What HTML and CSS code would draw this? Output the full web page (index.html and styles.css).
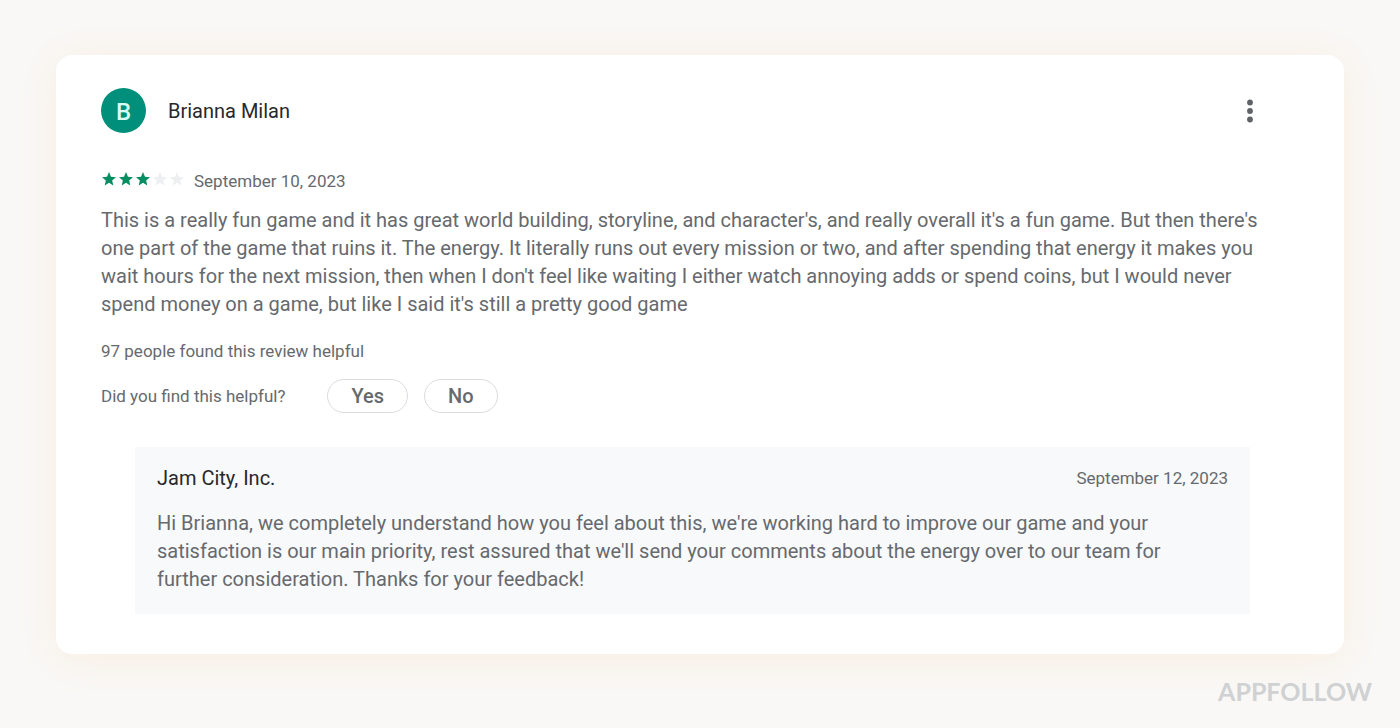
FILE: index.html
```html
<!DOCTYPE html>
<html lang="en">
<head>
    <meta charset="UTF-8">
    <meta name="viewport" content="width=device-width, initial-scale=1.0">
    <title>Review by Brianna Milan</title>
    <link rel="stylesheet" href="styles.css">
</head>
<body>
    <!-- one star shape, reused for the whole rating -->
    <svg class="sprite" aria-hidden="true">
        <symbol id="star" viewBox="0 0 24 24">
            <path d="M12 18.600L19.400 23l-2-8.400L24 9l-8.600-.700L12 0 8.600 8.300 0 9l6.600 5.600L4.600 23z"/>
        </symbol>
    </svg>

    <article class="review">
        <header class="review-header">
            <div class="avatar">B</div>
            <h1 class="name">Brianna Milan</h1>
            <button class="menu-button" type="button" aria-label="More options">
                <svg viewBox="0 0 24 24" width="24" height="24">
                    <circle cx="12" cy="3.500" r="2.900"/>
                    <circle cx="12" cy="12" r="2.900"/>
                    <circle cx="12" cy="20.500" r="2.900"/>
                </svg>
            </button>
        </header>

        <div class="rating">
            <div class="stars" role="img" aria-label="Rated 3 stars out of 5">
                <svg class="star filled"><use href="#star"/></svg>
                <svg class="star filled"><use href="#star"/></svg>
                <svg class="star filled"><use href="#star"/></svg>
                <svg class="star"><use href="#star"/></svg>
                <svg class="star"><use href="#star"/></svg>
            </div>
            <time class="small" datetime="2023-09-10">September 10, 2023</time>
        </div>

        <p class="text">This is a really fun game and it has great world building, storyline, and character's, and really overall it's a fun game. But then there's one part of the game that ruins it. The energy. It literally runs out every mission or two, and after spending that energy it makes you wait hours for the next mission, then when I don't feel like waiting I either watch annoying adds or spend coins, but I would never spend money on a game, but like I said it's still a pretty good game</p>

        <p class="small helpful-count">97 people found this review helpful</p>

        <div class="vote">
            <span class="small vote-label">Did you find this helpful?</span>
            <button class="vote-button" type="button">Yes</button>
            <button class="vote-button" type="button">No</button>
        </div>

        <section class="reply">
            <header class="reply-header">
                <h2 class="name">Jam City, Inc.</h2>
                <time class="small" datetime="2023-09-12">September 12, 2023</time>
            </header>
            <p class="text reply-text">Hi Brianna, we completely understand how you feel about this, we're working hard to improve our game and your satisfaction is our main priority, rest assured that we'll send your comments about the energy over to our team for further consideration. Thanks for your feedback!</p>
        </section>
    </article>

    <footer class="brand">APPFOLLOW</footer>
</body>
</html>
```

FILE: styles.css
```css
* {
    box-sizing: border-box;
}

body {
    margin: 0;
    padding: 55px 56px 0;
    background-color: #f9f8f6;
    color: #66696d;
    font-family: Roboto, 'Liberation Sans', sans-serif;
}

h1, h2, p {
    margin: 0;
}

.sprite {
    display: none;
}

.review {
    padding: 33px 67px 40px 45px;
    background: #fff;
    border-radius: 16px;
    box-shadow: 0 4px 40px #f8ede0;
}

.name {
    color: #27282b;
    font-size: 20px;
    font-weight: 400;
    line-height: 28px;
}

.text {
    font-size: 20px;
    line-height: 28px;
}

.small {
    font-size: 17px;
    line-height: 24px;
}

.review-header {
    display: flex;
    align-items: center;
    margin-bottom: 36px;
}

.avatar {
    width: 45px;
    height: 45px;
    margin-right: 22px;
    border-radius: 50%;
    background: #008f7a;
    color: #d9fbf5;
    font-size: 24px;
    font-weight: 500;
    line-height: 48px;
    text-align: center;
}

.menu-button {
    display: flex;
    margin-left: auto;
    margin-right: 15px;
    padding: 0;
    border: none;
    background: none;
    cursor: pointer;
}

.menu-button svg {
    fill: #5f6368;
}

.rating {
    display: flex;
    margin-bottom: 13px;
}

.stars {
    display: flex;
    gap: 3px;
    padding: 3px 10px 0 1px;
}

.star {
    width: 14px;
    height: 14px;
    fill: #eeeff0;
}

.star.filled {
    fill: #078d62;
}

.helpful-count {
    margin: 21px 0 16px;
}

.vote {
    display: flex;
    align-items: center;
    gap: 16px;
    margin-bottom: 34px;
}

.vote-label {
    margin-right: 26px;
}

.vote-button {
    height: 34px;
    padding: 0 23px;
    border: 1px solid #dadce0;
    border-radius: 17px;
    background: #fff;
    color: #66696d;
    font-family: inherit;
    font-size: 20px;
    font-weight: 500;
    cursor: pointer;
}

.reply {
    margin: 0 27px 0 34px;
    padding: 17px 22px 21px;
    background: #f8f9fb;
}

.reply-header {
    display: flex;
    justify-content: space-between;
    align-items: center;
    margin-bottom: 17px;
}

.reply-text {
    padding-right: 22px;
}

.brand {
    margin: 22px -28px 0 0;
    color: #cfd1d2;
    font-family: Lato, sans-serif;
    font-size: 25px;
    font-weight: 700;
    line-height: 30px;
    text-align: right;
}
```
